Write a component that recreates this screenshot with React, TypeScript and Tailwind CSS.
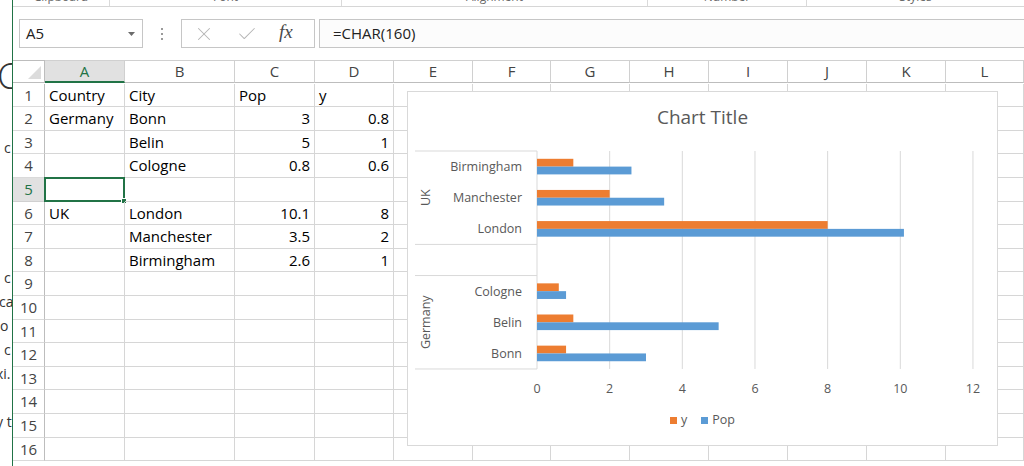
import React from "react";
import { X, Check } from "lucide-react";

type Bar = { name: string; y: number; pop: number } | null;

const columns = ["A", "B", "C", "D", "E", "F", "G", "H", "I", "J", "K", "L"];

// sheet values, first four columns only
const sheet: string[][] = [
  ["Country", "City", "Pop", "y"],
  ["Germany", "Bonn", "3", "0.8"],
  ["", "Belin", "5", "1"],
  ["", "Cologne", "0.8", "0.6"],
  ["", "", "", ""],
  ["UK", "London", "10.1", "8"],
  ["", "Manchester", "3.5", "2"],
  ["", "Birmingham", "2.6", "1"],
];

const bars: Bar[] = [
  { name: "Birmingham", y: 1, pop: 2.6 },
  { name: "Manchester", y: 2, pop: 3.5 },
  { name: "London", y: 8, pop: 10.1 },
  null,
  { name: "Cologne", y: 0.6, pop: 0.8 },
  { name: "Belin", y: 1, pop: 5 },
  { name: "Bonn", y: 0.8, pop: 3 },
];

const X0 = 130;
const UNIT = 36.33;
const TOP = 60;
const CAT = 31.14;
const BOTTOM = TOP + CAT * 7;

const isNumber = (v: string) => v !== "" && !isNaN(Number(v));

const RibbonLabels = () => (
  <div className="h-[7px] overflow-hidden border-b border-[#d6d6d6] flex text-[12px] text-[#6a6a6a] leading-none">
    <div className="w-[97px] border-r border-[#dadada] text-center -mt-[9px]">Clipboard</div>
    <div className="w-[232px] border-r border-[#dadada] text-center -mt-[9px]">Font</div>
    <div className="w-[306px] border-r border-[#dadada] text-center -mt-[9px]">Alignment</div>
    <div className="w-[159px] border-r border-[#dadada] text-center -mt-[9px]">Number</div>
    <div className="flex-1 text-center -mt-[9px]">Styles</div>
  </div>
);

const FormulaBar = () => (
  <div className="mt-[12px] h-[29px] flex items-stretch text-[15px] text-[#222]">
    <div className="ml-[6px] w-[124px] border border-[#c6c6c6] bg-white flex items-center justify-between pl-[6px] pr-[7px]">
      <span>A5</span>
      <svg width="7" height="4" viewBox="0 0 7 4">
        <path d="M0 0 L7 0 L3.5 4 Z" fill="#6b6b6b" />
      </svg>
    </div>
    <div className="w-[38px] flex flex-col items-center justify-center gap-[3px]">
      <div className="w-[2px] h-[2px] bg-[#9a9a9a]" />
      <div className="w-[2px] h-[2px] bg-[#9a9a9a]" />
      <div className="w-[2px] h-[2px] bg-[#9a9a9a]" />
    </div>
    <div className="w-[134px] border border-[#c6c6c6] bg-white flex items-center pl-[11px] gap-[21px]">
      <X size={22} strokeWidth={1.1} color="#b5b5b5" />
      <Check size={22} strokeWidth={1.1} color="#b5b5b5" />
      <span className="font-['Liberation_Serif',serif] italic text-[19px] text-[#4a4a4a] -mt-[2px]">fx</span>
    </div>
    <div className="ml-[4px] flex-1 border-t border-l border-b border-[#c6c6c6] bg-[#fcfcfc] flex items-center pl-[13px]">
      =CHAR(160)
    </div>
  </div>
);

const Grid = () => (
  <div className="mt-[12px] grid grid-cols-[32px_80px_110px_80px_79px_79px_78px_79px_79px_79px_79px_79px_78px] auto-rows-[23.6px] text-[15px]">
    {/* header row */}
    <div className="h-[23px] border-t border-r border-b border-[#bdbdbd] flex items-end justify-end p-[3px] bg-white">
      <svg width="13" height="13" viewBox="0 0 13 13">
        <path d="M13 0 L13 13 L0 13 Z" fill="#dcdcdc" />
      </svg>
    </div>
    {columns.map((c) =>
      c === "A" ? (
        <div
          key={c}
          className="h-[23px] border-t border-r border-[#d0d0d0] border-b-2 border-b-[#217346] bg-[#e1e1e1] text-[#217346] text-[15px] flex items-center justify-center"
        >
          {c}
        </div>
      ) : (
        <div
          key={c}
          className="h-[23px] border-t border-r border-b border-[#d0d0d0] border-b-[#bdbdbd] bg-white text-[#444] text-[15px] flex items-center justify-center"
        >
          {c}
        </div>
      )
    )}
    {Array.from({ length: 16 }).map((_, r) => {
      const row = sheet[r] ?? ["", "", "", ""];
      return (
        <React.Fragment key={r}>
          <div
            className={
              r === 4
                ? "border-r border-b border-r-[#bdbdbd] border-b-[#d0d0d0] bg-[#e1e1e1] text-[#217346] flex items-center justify-center"
                : "border-r border-b border-r-[#bdbdbd] border-b-[#dadada] bg-white text-[#444] flex items-center justify-center"
            }
          >
            {r + 1}
          </div>
          {columns.map((c, ci) => {
            const v = row[ci] ?? "";
            const num = isNumber(v) && r > 0;
            return (
              <div
                key={c}
                className={
                  num
                    ? "relative border-r border-b border-[#d6d6d6] px-[4px] flex items-center justify-end text-black"
                    : "relative border-r border-b border-[#d6d6d6] px-[4px] flex items-center text-black"
                }
              >
                {v}
                {r === 4 && ci === 0 && (
                  <div className="absolute -left-[1px] -top-[1px] -right-[1px] -bottom-[1px] border-2 border-[#217346]">
                    <div className="absolute -right-[4px] -bottom-[4px] w-[6px] h-[6px] bg-[#217346] border border-white" />
                  </div>
                )}
              </div>
            );
          })}
        </React.Fragment>
      );
    })}
  </div>
);

const Chart = () => (
  <div className="absolute left-[407px] top-[91px] w-[591px] h-[355px] bg-white border border-[#d9d9d9] flex flex-col font-['Open_Sans',sans-serif] text-[#595959]">
    <div className="h-[51px] flex items-center justify-center text-[19px]">Chart Title</div>
    <svg width="589" height="258" viewBox="1 52 589 258" className="block">
      {[2, 4, 6, 8, 10, 12].map((v) => (
        <line key={v} x1={X0 + v * UNIT} x2={X0 + v * UNIT} y1={TOP} y2={BOTTOM} stroke="#d9d9d9" strokeWidth="1" />
      ))}
      <line x1={X0} x2={X0} y1={TOP} y2={BOTTOM} stroke="#d9d9d9" strokeWidth="1" />
      {[TOP, TOP + CAT * 3, TOP + CAT * 4, BOTTOM].map((y) => (
        <line key={y} x1={8} x2={X0} y1={y} y2={y} stroke="#d9d9d9" strokeWidth="1" />
      ))}
      {bars.map((b, i) => {
        if (!b) return null;
        const top = TOP + CAT * i;
        return (
          <g key={b.name}>
            <rect x={X0} y={top + 7.8} width={b.y * UNIT} height={7.8} fill="#ed7d31" />
            <rect x={X0} y={top + 15.6} width={b.pop * UNIT} height={7.8} fill="#5b9bd5" />
            <text x={115} y={top + CAT / 2 + 4.5} textAnchor="end" fontSize="12.5" fill="#595959">
              {b.name}
            </text>
          </g>
        );
      })}
      <text transform={`translate(23 ${TOP + (CAT * 3) / 2}) rotate(-90)`} textAnchor="middle" fontSize="12.5" fill="#595959">
        UK
      </text>
      <text transform={`translate(23 ${TOP + CAT * 4 + (CAT * 3) / 2}) rotate(-90)`} textAnchor="middle" fontSize="12.5" fill="#595959">
        Germany
      </text>
      {[0, 2, 4, 6, 8, 10, 12].map((v) => (
        <text key={v} x={X0 + v * UNIT} y={302} textAnchor="middle" fontSize="12.5" fill="#595959">
          {v}
        </text>
      ))}
    </svg>
    <div className="flex-1 flex items-center justify-center gap-[4px] text-[12.5px] pb-[6px]">
      <div className="w-[7px] h-[7px] bg-[#ed7d31]" />
      <span className="mr-[10px]">y</span>
      <div className="w-[7px] h-[7px] bg-[#5b9bd5]" />
      <span>Pop</span>
    </div>
  </div>
);

const BehindWindow = () => (
  <div className="relative w-[12px] h-full overflow-hidden bg-white text-[#333] text-[14px] leading-none">
    <span className="absolute left-[-3px] top-[58px] text-[36px] font-light">C</span>
    <span className="absolute left-[4px] top-[141px]">c</span>
    <span className="absolute left-[4px] top-[271px]">c</span>
    <span className="absolute left-[-1px] top-[295px]">ca</span>
    <span className="absolute left-[0px] top-[319px]">o</span>
    <span className="absolute left-[4px] top-[343px]">c</span>
    <span className="absolute left-[-4px] top-[367px]">xi.</span>
    <span className="absolute left-[-4px] top-[415px]">y t</span>
  </div>
);

export default function App() {
  return (
    <div className="relative w-[1024px] h-[466px] overflow-hidden bg-white flex font-['Open_Sans',sans-serif]">
      <BehindWindow />
      <div className="w-[1px] bg-[#217346]" />
      <div className="flex-1 flex flex-col bg-white">
        <RibbonLabels />
        <FormulaBar />
        <Grid />
      </div>
      <Chart />
    </div>
  );
}
